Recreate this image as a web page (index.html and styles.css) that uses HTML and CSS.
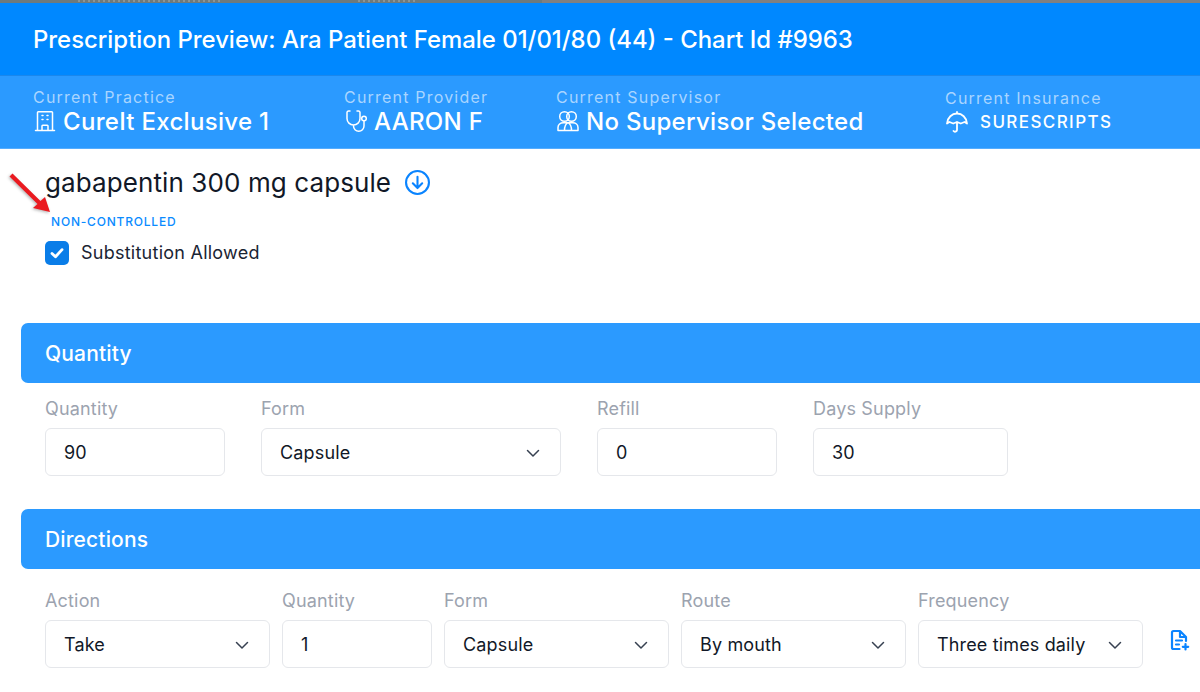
FILE: index.html
```html
<!DOCTYPE html>
<html lang="en">
<head>
<meta charset="utf-8">
<title>Prescription Preview</title>
<link rel="stylesheet" href="styles.css">
</head>
<body>
<div class="backdrop">
  <div class="backdrop-left"><span class="smudge smudge-a"></span><span class="smudge smudge-b"></span></div>
  <div class="backdrop-right"></div>
</div>
<header class="title-bar">
  <h1>Prescription Preview: Ara Patient Female 01/01/80 (44) - Chart Id #9963</h1>
</header>
<section class="context-bar">
  <div class="ctx">
    <div class="ctx-label">Current Practice</div>
    <div class="ctx-value">
      <svg class="ctx-icon" viewBox="0 0 24 24" fill="none" stroke="currentColor" stroke-width="1.5" stroke-linecap="round" stroke-linejoin="round"><path d="M2.5 21.500h19M4.500 21.500V3.500a.8.8 0 0 1 .8-.8h13.400a.8.8 0 0 1 .8.8V21.500M9 21.500v-4.500a.8.8 0 0 1 .8-.8h4.400a.8.8 0 0 1 .8.8V21.500M9 6.500h1M14 6.500h1M9 10.500h1M14 10.500h1"/></svg>
      <span>CureIt Exclusive 1</span>
    </div>
  </div>
  <div class="ctx">
    <div class="ctx-label">Current Provider</div>
    <div class="ctx-value">
      <svg class="ctx-icon" viewBox="0 0 24 24" fill="none" stroke="currentColor" stroke-width="1.5" stroke-linecap="round" stroke-linejoin="round"><path d="M6 2H4.500C3.700 2 3 2.700 3 3.500V9.500a6.500 6.500 0 0 0 13 0V3.500C16 2.700 15.300 2 14.500 2H13M9.500 16v1a5.250 5.250 0 0 0 10.500 0v-5.200"/><circle cx="20" cy="9.500" r="2.300"/></svg>
      <span>AARON F</span>
    </div>
  </div>
  <div class="ctx">
    <div class="ctx-label">Current Supervisor</div>
    <div class="ctx-value">
      <svg class="ctx-icon" viewBox="0 0 24 24" fill="none" stroke="currentColor" stroke-width="1.5" stroke-linecap="round" stroke-linejoin="round"><circle cx="8.500" cy="7.500" r="4.800"/><circle cx="15.500" cy="7.500" r="4.800"/><path d="M2 21.500v-3c0-3 2.400-4.800 5.300-4.800h9.400c2.900 0 5.300 1.800 5.300 4.800v3zM12 13.700c-2.500 1.300-3.500 3.300-3.500 7.800M12 13.700c2.500 1.300 3.500 3.300 3.500 7.800"/></svg>
      <span>No Supervisor Selected</span>
    </div>
  </div>
  <div class="ctx ctx-insurance">
    <div class="ctx-label">Current Insurance</div>
    <div class="ctx-value">
      <svg class="ctx-icon" viewBox="0 0 24 24" fill="none" stroke="currentColor" stroke-width="1.800" stroke-linecap="round" stroke-linejoin="round"><path d="M12 2v1.500M2 13.500C2.500 7.500 7 3.500 12 3.500s9.500 4 10 10l-2.500-1.500-3.700 1.500-3.800-1.500-3.800 1.500L4.500 12zM12 12v8a2 2 0 0 1-3.500 1"/></svg>
      <span>SURESCRIPTS</span>
    </div>
  </div>
</section>

<section class="drug">
  <div class="drug-title">
    <h2>gabapentin 300 mg capsule</h2>
    <svg class="drug-icon" viewBox="0 0 24 24" fill="none" stroke="currentColor" stroke-width="2" stroke-linecap="round" stroke-linejoin="round"><circle cx="12" cy="12" r="11"/><path d="M12 6.500v10.500M7.500 12.800 12 17.300l4.500-4.500"/></svg>
  </div>
  <div class="schedule">NON-CONTROLLED</div>
  <label class="check">
    <span class="check-box"><svg viewBox="0 0 24 24" fill="none" stroke="#fff" stroke-width="3.400" stroke-linecap="round" stroke-linejoin="round"><path d="M6 12.500 10.200 16.500 18 8"/></svg></span>
    <span class="check-text">Substitution Allowed</span>
  </label>
</section>

<svg class="arrow" viewBox="0 0 50 48"><path d="M7.500 3.400 35.500 30.900 40 27 45 42 28 38 32.500 34.100 4.500 6.600z"/></svg>

<section class="panel panel-quantity">
  <h3 class="panel-head">Quantity</h3>
  <div class="fields">
    <div class="field w180"><div class="field-label">Quantity</div><div class="box">90</div></div>
    <div class="field w300"><div class="field-label">Form</div><div class="box select">Capsule<svg class="chev" viewBox="0 0 16 16"><path d="M2.500 5.500 8 11l5.500-5.500"/></svg></div></div>
    <div class="field w180"><div class="field-label">Refill</div><div class="box">0</div></div>
    <div class="field w195"><div class="field-label">Days Supply</div><div class="box">30</div></div>
  </div>
</section>

<section class="panel panel-directions">
  <h3 class="panel-head">Directions</h3>
  <div class="fields tight">
    <div class="field w225"><div class="field-label">Action</div><div class="box select">Take<svg class="chev" viewBox="0 0 16 16"><path d="M2.500 5.500 8 11l5.500-5.500"/></svg></div></div>
    <div class="field w150"><div class="field-label">Quantity</div><div class="box">1</div></div>
    <div class="field w225"><div class="field-label">Form</div><div class="box select">Capsule<svg class="chev" viewBox="0 0 16 16"><path d="M2.500 5.500 8 11l5.500-5.500"/></svg></div></div>
    <div class="field w225"><div class="field-label">Route</div><div class="box select">By mouth<svg class="chev" viewBox="0 0 16 16"><path d="M2.500 5.500 8 11l5.500-5.500"/></svg></div></div>
    <div class="field w225"><div class="field-label">Frequency</div><div class="box select">Three times daily<svg class="chev" viewBox="0 0 16 16"><path d="M2.500 5.500 8 11l5.500-5.500"/></svg></div></div>
    <svg class="note-icon" viewBox="0 0 20 22" fill="none" stroke="#0a84ff" stroke-width="2.200" stroke-linecap="round" stroke-linejoin="round"><path d="M9.500 20H3.500A1.500 1.500 0 0 1 2 18.500v-15A1.500 1.500 0 0 1 3.500 2h6.500l6 6v4M10 2v6h6M6 11.500h6M6 15.500h3M15.500 15v5.500M12.800 17.800h5.400"/></svg>
  </div>
</section>
</body>
</html>
```
FILE: styles.css
```css
* { box-sizing: border-box; }
html, body { margin: 0; padding: 0; }
body {
  width: 1200px;
  height: 692px;
  overflow: hidden;
  position: relative;
  background: #fff;
  font-family: Inter, "Noto Sans", sans-serif;
  color: #1a2433;
}
.backdrop { display: flex; height: 3px; overflow: hidden; }
.backdrop-left {
  width: 542px;
  display: flex;
  gap: 138px;
  padding-left: 78px;
  background: #6d7a7c;
}
.backdrop-right { flex: 1; background: #808080; }
.smudge {
  height: 2px;
  background: repeating-linear-gradient(90deg, #8b9596 0 2px, transparent 2px 5px);
}
.smudge-a { width: 142px; }
.smudge-b { width: 57px; }

.title-bar {
  height: 73px;
  display: flex;
  align-items: center;
  padding: 1px 33px 0;
  background: #0088ff;
  border-bottom: 1px solid #1b87ec;
}
.title-bar h1 {
  margin: 0;
  color: #fff;
  font-size: 23.900px;
  font-weight: 500;
  line-height: 30px;
}

.context-bar {
  height: 73px;
  display: grid;
  grid-template-columns: 311px 212px 389px 1fr;
  padding: 12px 0 0 33px;
  background: #2b9aff;
  border-bottom: 1px solid #55adff;
}
.ctx-label {
  font-size: 16px;
  line-height: 18px;
  letter-spacing: 1.200px;
  color: #a9d5ff;
}
.ctx-value {
  display: flex;
  align-items: center;
  gap: 6px;
  margin-top: 1px;
  height: 28px;
  font-size: 24px;
  font-weight: 500;
  letter-spacing: .3px;
  color: #fff;
}
.ctx-icon { width: 24px; height: 24px; flex: none; color: #fff; }
.ctx-insurance { padding-top: 1px; }
.ctx-insurance .ctx-value {
  font-size: 17px;
  letter-spacing: 1.400px;
  gap: 11px;
  margin-top: 1px;
}

.drug { padding: 16px 0 0 45px; height: 174px; }
.drug-title { display: flex; align-items: center; gap: 14px; height: 34px; }
.drug-title h2 {
  margin: 0;
  font-size: 26px;
  font-weight: 400;
  letter-spacing: .1px;
  color: #111827;
}
.drug-icon { width: 25px; height: 25px; color: #0a84ff; flex: none; }
.schedule {
  margin: 15px 0 0 6px;
  font-size: 12px;
  line-height: 16px;
  font-weight: 500;
  letter-spacing: .8px;
  color: #0a8bff;
}
.check { display: flex; align-items: center; gap: 12px; margin-top: 11px; font-size: 18px; letter-spacing: .25px; }
.check-text { margin-top: -2px; }
.check-box {
  width: 24px;
  height: 24px;
  border-radius: 5px;
  background: #0a7de8;
  display: flex;
  align-items: center;
  justify-content: center;
}
.check-box svg { width: 20px; height: 20px; }

.arrow {
  position: absolute;
  left: 5px;
  top: 170px;
  width: 50px;
  height: 48px;
  fill: #ea1a20;
  filter: drop-shadow(-1px 1px 1.500px rgba(0, 0, 0, .3));
}

.panel { margin-left: 21px; }
.panel-directions { margin-top: 33px; }
.panel-head {
  margin: 0;
  height: 60px;
  display: flex;
  align-items: center;
  padding: 1px 0 0 24px;
  background: #2b9aff;
  border-radius: 7px 0 0 7px;
  color: #fff;
  font-size: 21px;
  font-weight: 500;
  letter-spacing: .15px;
}
.fields { display: flex; gap: 36px; padding: 15px 0 0 24px; }
.fields.tight { gap: 12px; padding-top: 21px; }
.field-label {
  font-size: 18px;
  line-height: 22px;
  letter-spacing: .17px;
  color: #9ca3af;
  margin-bottom: 8px;
}
.w150 { width: 150px; }
.w180 { width: 180px; }
.w195 { width: 195px; }
.w225 { width: 225px; }
.w300 { width: 300px; }
.box {
  position: relative;
  height: 48px;
  display: flex;
  align-items: center;
  padding: 0 18px;
  border: 1px solid #e5e7eb;
  border-radius: 6px;
  background: #fff;
  font-size: 18px;
  letter-spacing: .15px;
  color: #111827;
}
.chev {
  position: absolute;
  right: 19px;
  top: 16px;
  width: 16px;
  height: 16px;
  fill: none;
  stroke: #374151;
  stroke-width: 1.500;
  stroke-linecap: round;
  stroke-linejoin: round;
}
.note-icon { flex: none; width: 20px; height: 22px; margin: 39px 0 0 15px; }
```
